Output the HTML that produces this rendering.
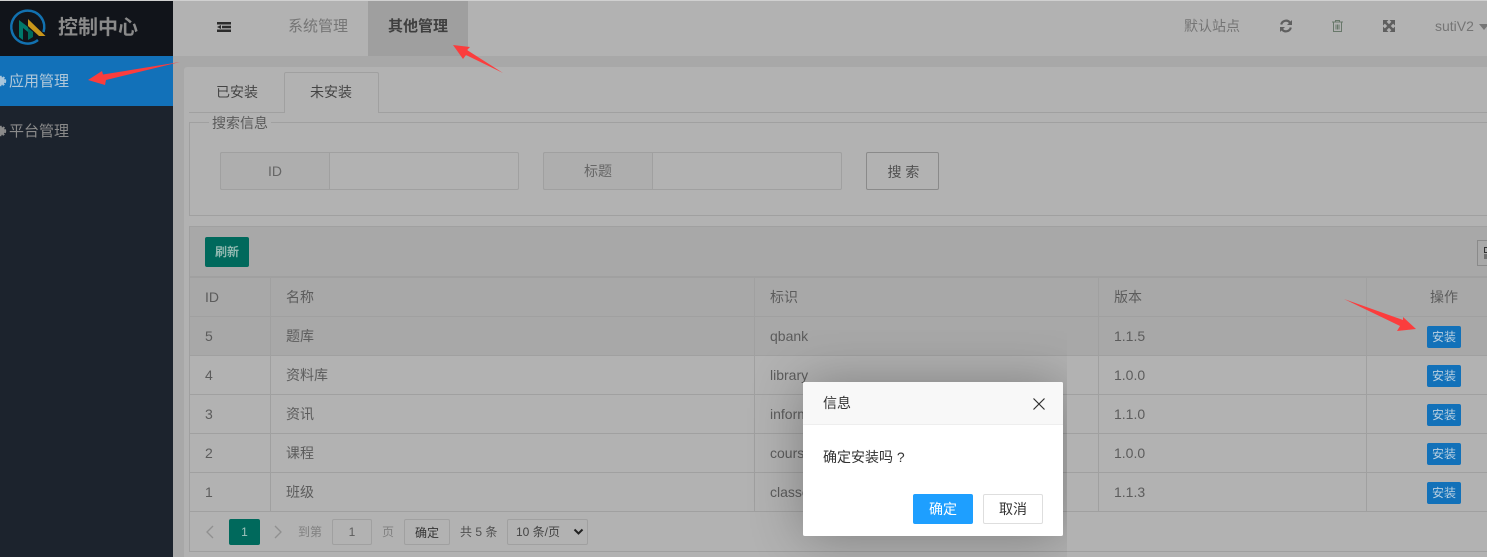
<!DOCTYPE html>
<html><head><meta charset="utf-8">
<style>
*{box-sizing:border-box}
html,body{margin:0;padding:0;width:1487px;height:557px;overflow:hidden;background:#a8a8a8}
body{position:relative;font:14px/20px "Liberation Sans","Noto Sans CJK SC",sans-serif;color:#5c5c5c}
.a{position:absolute;white-space:nowrap}
.t{position:absolute;white-space:nowrap;line-height:20px}
.hl{position:absolute;height:1px;background:#a0a0a0}
.vl{position:absolute;width:1px;background:#a0a0a0}
.inst{position:absolute;left:1427px;width:34px;height:22px;background:#1271b9;border-radius:2px;color:#b8cfe0;font-size:12px;line-height:22px;text-align:center}
</style></head><body>
<div class="a" style="left:0;top:0;width:1487px;height:1px;background:#d0d0d0;z-index:5"></div>

<!-- sidebar -->
<div class="a" style="left:0;top:0;width:173px;height:557px;background:#1c232d"></div>
<div class="a" style="left:0;top:1px;width:173px;height:55px;background:#11141a"></div>
<div class="a" style="left:0;top:56px;width:173px;height:50px;background:#1271b9"></div>
<svg class="a" style="left:0;top:0" width="56" height="56" viewBox="0 0 56 56">
<path d="M38 40A16.500 16.500 0 1 1 43.500 32" fill="none" stroke="#1271b0" stroke-width="2.500"/>
<path d="M19 20L28 27V32L23 28V40L19 37z" fill="#00796b"/>
<path d="M28 28L33 32V37L28 40z" fill="#00695c"/>
<path d="M28 19L45.500 36H39L28 26z" fill="#c9961a"/>
</svg>
<div class="t" style="left:58px;top:18px;font-size:20px;font-weight:bold;color:#8a8a8a">控制中心</div>
<svg class="a" style="left:0;top:75px" width="7" height="12" viewBox="0 0 7 12"><circle cx="1" cy="6" r="4" fill="#a8c6dc"/><circle cx="1" cy="6" r="4.500" fill="none" stroke="#a8c6dc" stroke-width="1.400" stroke-dasharray="2 1.300"/></svg>
<div class="t" style="left:9px;top:72px;color:#b0c8da;font-size:15px">应用管理</div>
<svg class="a" style="left:0;top:125px" width="7" height="12" viewBox="0 0 7 12"><circle cx="1" cy="6" r="4" fill="#8a8a8a"/><circle cx="1" cy="6" r="4.500" fill="none" stroke="#8a8a8a" stroke-width="1.400" stroke-dasharray="2 1.300"/></svg>
<div class="t" style="left:9px;top:122px;color:#8a8a8a;font-size:15px">平台管理</div>

<!-- top bar -->
<div class="a" style="left:173px;top:0;width:1314px;height:56px;background:#b2b2b2"></div>
<div class="a" style="left:368px;top:0;width:100px;height:56px;background:#9f9f9f"></div>
<svg class="a" style="left:217px;top:22px" width="14" height="10" viewBox="0 0 14 10"><path d="M0 0h14v2.500H0zM5 3.700h9v2.500H5zM0 7.500h14V10H0z" fill="#2c2c2c"/><path d="M4 3v4L0 5z" fill="#2c2c2c"/></svg>
<div class="t" style="left:288px;top:17px;color:#757575;font-size:15px">系统管理</div>
<div class="t" style="left:388px;top:17px;color:#3f3f3f;font-weight:bold;font-size:15px">其他管理</div>
<div class="t" style="left:1184px;top:16px;color:#757575">默认站点</div>
<svg class="a" style="left:1279px;top:19px" width="14" height="14" viewBox="0 0 14 14"><path d="M2.200 5.500A5 5 0 0 1 11 3.600" fill="none" stroke="#5f5f5f" stroke-width="2.200"/><path d="M13 1v5H8z" fill="#5f5f5f"/><path d="M11.800 8.500A5 5 0 0 1 3 10.400" fill="none" stroke="#5f5f5f" stroke-width="2.200"/><path d="M1 13V8h5z" fill="#5f5f5f"/></svg>
<svg class="a" style="left:1331px;top:19px" width="13" height="14" viewBox="0 0 13 14"><path d="M1 3h11M4.500 3V1.500h4V3M2.500 3v9.500h8V3M5 5.500v5M6.500 5.500v5M8 5.500v5" fill="none" stroke="#68786a" stroke-width="1"/></svg>
<svg class="a" style="left:1382px;top:19px" width="14" height="14" viewBox="0 0 14 14"><path d="M3 3L11 11M11 3L3 11" stroke="#5f5f5f" stroke-width="2.600"/><path d="M1 1h5.500L1 6.500zM13 1v5.500L7.500 1zM1 13V7.500L6.500 13zM13 13H7.500L13 7.500z" fill="#5f5f5f"/></svg>
<div class="t" style="left:1435px;top:16px;color:#757575">sutiV2</div>
<div class="a" style="left:1479px;top:24px;width:0;height:0;border:5px solid transparent;border-top:6px solid #757575;border-bottom:0"></div>

<!-- panel -->
<div class="a" style="left:184px;top:67px;width:1303px;height:490px;background:#b2b2b2;border-radius:3px 0 0 0"></div>
<div class="hl" style="left:189px;top:112px;width:1298px"></div>
<div class="a" style="left:284px;top:72px;width:95px;height:41px;background:#b2b2b2;border:1px solid #a0a0a0;border-bottom:0;border-radius:2px 2px 0 0"></div>
<div class="t" style="left:216px;top:82px;color:#444">已安装</div>
<div class="t" style="left:310px;top:82px;color:#444">未安装</div>

<!-- fieldset -->
<div class="a" style="left:189px;top:122px;width:1298px;height:94px;border:1px solid #a0a0a0;border-right:0"></div>
<div class="t" style="left:209px;top:113px;padding:0 3px;background:#b2b2b2;color:#5a5a5a">搜索信息</div>
<div class="a" style="left:220px;top:152px;width:299px;height:38px;border:1px solid #a0a0a0;border-radius:2px"></div>
<div class="a" style="left:220px;top:152px;width:110px;height:38px;border:1px solid #a0a0a0;background:#aeaeae;border-radius:2px 0 0 2px;text-align:center;line-height:36px;color:#666">ID</div>
<div class="a" style="left:543px;top:152px;width:299px;height:38px;border:1px solid #a0a0a0;border-radius:2px"></div>
<div class="a" style="left:543px;top:152px;width:110px;height:38px;border:1px solid #a0a0a0;background:#aeaeae;border-radius:2px 0 0 2px;text-align:center;line-height:36px;color:#666">标题</div>
<div class="a" style="left:866px;top:152px;width:73px;height:38px;border:1px solid #8a8a8a;border-radius:2px;padding-left:2px;text-align:center;line-height:38px;color:#505050">搜 索</div>

<!-- table -->
<div class="a" style="left:189px;top:226px;width:1298px;height:51px;background:#a8a8a8;border:1px solid #a0a0a0;border-right:0"></div>
<div class="a" style="left:205px;top:237px;width:44px;height:30px;background:#00695c;border-radius:2px;color:#8fb8b0;font-size:12px;font-weight:bold;line-height:30px;text-align:center">刷新</div>
<div class="a" style="left:1477px;top:240px;width:14px;height:26px;border:1px solid #8a8a8a;background:#a8a8a8"></div>
<svg class="a" style="left:1484px;top:247px" width="3" height="13" viewBox="0 0 3 13"><rect x=".5" y=".5" width="4" height="5" fill="none" stroke="#333"/><rect y="7" width="3" height="5" fill="#707070"/></svg>

<div class="a" style="left:189px;top:277px;width:1298px;height:39px;background:#a8a8a8"></div>
<div class="a" style="left:189px;top:316px;width:1298px;height:39px;background:#a8a8a8"></div>
<div class="hl" style="left:189px;top:277px;width:1298px"></div>
<div class="hl" style="left:189px;top:316px;width:1298px"></div>
<div class="hl" style="left:189px;top:355px;width:1298px"></div>
<div class="hl" style="left:189px;top:394px;width:1298px"></div>
<div class="hl" style="left:189px;top:433px;width:1298px"></div>
<div class="hl" style="left:189px;top:472px;width:1298px"></div>
<div class="hl" style="left:189px;top:511px;width:1298px"></div>
<div class="hl" style="left:189px;top:551px;width:1298px"></div>
<div class="vl" style="left:189px;top:226px;height:326px"></div>
<div class="vl" style="left:270px;top:277px;height:234px"></div>
<div class="vl" style="left:754px;top:277px;height:234px"></div>
<div class="vl" style="left:1098px;top:277px;height:234px"></div>
<div class="vl" style="left:1366px;top:277px;height:234px"></div>

<div class="t" style="left:205px;top:287px">ID</div>
<div class="t" style="left:286px;top:287px">名称</div>
<div class="t" style="left:770px;top:287px">标识</div>
<div class="t" style="left:1114px;top:287px">版本</div>
<div class="t" style="left:1430px;top:287px">操作</div>

<div class="t" style="left:205px;top:326px">5</div><div class="t" style="left:286px;top:326px">题库</div><div class="t" style="left:770px;top:326px">qbank</div><div class="t" style="left:1114px;top:326px">1.1.5</div><div class="inst" style="top:326px">安装</div>
<div class="t" style="left:205px;top:365px">4</div><div class="t" style="left:286px;top:365px">资料库</div><div class="t" style="left:770px;top:365px">library</div><div class="t" style="left:1114px;top:365px">1.0.0</div><div class="inst" style="top:365px">安装</div>
<div class="t" style="left:205px;top:404px">3</div><div class="t" style="left:286px;top:404px">资讯</div><div class="t" style="left:770px;top:404px">information</div><div class="t" style="left:1114px;top:404px">1.1.0</div><div class="inst" style="top:404px">安装</div>
<div class="t" style="left:205px;top:443px">2</div><div class="t" style="left:286px;top:443px">课程</div><div class="t" style="left:770px;top:443px">course</div><div class="t" style="left:1114px;top:443px">1.0.0</div><div class="inst" style="top:443px">安装</div>
<div class="t" style="left:205px;top:482px">1</div><div class="t" style="left:286px;top:482px">班级</div><div class="t" style="left:770px;top:482px">classes</div><div class="t" style="left:1114px;top:482px">1.1.3</div><div class="inst" style="top:482px">安装</div>

<!-- pagination -->
<svg class="a" style="left:205px;top:525px" width="10" height="14" viewBox="0 0 10 14"><path d="M8 1L2 7l6 6" fill="none" stroke="#909090" stroke-width="1.300"/></svg>
<div class="a" style="left:229px;top:519px;width:31px;height:26px;background:#00695c;border-radius:2px;color:#a0c4bd;font-size:12px;line-height:26px;text-align:center">1</div>
<svg class="a" style="left:273px;top:525px" width="10" height="14" viewBox="0 0 10 14"><path d="M2 1l6 6-6 6" fill="none" stroke="#909090" stroke-width="1.300"/></svg>
<div class="t" style="left:298px;top:522px;font-size:12px;color:#808080">到第</div>
<div class="a" style="left:332px;top:519px;width:40px;height:26px;border:1px solid #a0a0a0;border-radius:2px;font-size:12px;line-height:24px;text-align:center">1</div>
<div class="t" style="left:382px;top:522px;font-size:12px;color:#808080">页</div>
<div class="a" style="left:404px;top:519px;width:46px;height:26px;border:1px solid #a0a0a0;border-radius:2px;font-size:12px;line-height:26px;text-align:center;color:#333">确定</div>
<div class="t" style="left:460px;top:522px;font-size:12px;color:#505050">共 5 条</div>
<div class="a" style="left:507px;top:519px;width:81px;height:26px;border:1px solid #a0a0a0;border-radius:2px;font-size:12px;line-height:24px;padding-left:8px;color:#444">10 条/页</div>
<svg class="a" style="left:573px;top:528px" width="11" height="8" viewBox="0 0 11 8"><path d="M1.500 1.500l4 4 4-4" fill="none" stroke="#222" stroke-width="2"/></svg>

<!-- arrows -->
<svg class="a" style="left:0;top:0;z-index:3" width="1487" height="557" viewBox="0 0 1487 557">
<path d="M180 62L103 74.500 102 71 88 80 105 85 106 80z" fill="#fb3d3d"/>
<path d="M503 73L467 50 470 47 453 45 463 59 466 55z" fill="#fb3d3d"/>
<path d="M1344 299L1403 320 1403 317 1416 329 1397 331 1400 326z" fill="#fb3d3d"/>
</svg>

<!-- dialog -->
<div class="a" style="left:740px;top:330px;width:327px;height:227px;overflow:hidden;z-index:4">
 <div class="a" style="left:63px;top:52px;width:260px;height:154px;box-shadow:1px 1px 50px rgba(0,0,0,.3)"></div>
</div>
<div class="a" style="left:803px;top:382px;width:260px;height:154px;background:#fff;border-radius:2px;z-index:5">
 <div class="a" style="left:0;top:0;width:260px;height:43px;background:#f8f8f8;border-bottom:1px solid #eee;border-radius:2px 2px 0 0"></div>
 <div class="t" style="left:20px;top:11px;color:#333">信息</div>
 <svg class="a" style="left:230px;top:16px" width="12" height="12" viewBox="0 0 12 12"><path d="M.5.500l11 11M11.500.500l-11 11" stroke="#2f2f2f" stroke-width="1.200"/></svg>
 <div class="t" style="left:20px;top:65px;color:#333">确定安装吗 ?</div>
 <div class="a" style="left:110px;top:112px;width:60px;height:30px;background:#1e9fff;border-radius:2px;color:#fff;line-height:30px;text-align:center">确定</div>
 <div class="a" style="left:180px;top:112px;width:60px;height:30px;background:#fff;border:1px solid #dedede;border-radius:2px;color:#333;line-height:28px;text-align:center">取消</div>
</div>
</body></html>
